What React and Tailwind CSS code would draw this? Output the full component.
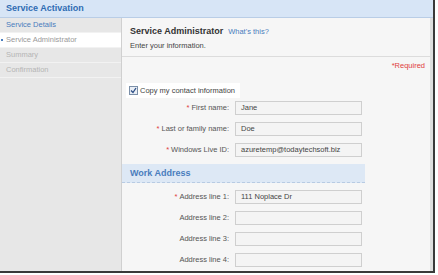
import React from 'react';

const navItems = [
  { label: 'Service Details', state: 'done' },
  { label: 'Service Administrator', state: 'current' },
  { label: 'Summary', state: 'todo' },
  { label: 'Confirmation', state: 'todo' },
];

const Field = ({ label, value, required }) => (
  <div className="flex items-center h-[14px]">
    <div className="w-[113px] text-right pr-[6px] text-[7.5px] leading-none text-[#555] whitespace-nowrap">
      {required && <span className="text-[#e04040] mr-[2px]">*</span>}
      {label}
    </div>
    <div className="w-[127px] h-[14px] border border-[#cfcfcf] bg-[#f4f4f4] flex items-center px-[5px] text-[7.5px] leading-none text-[#444]">
      {value}
    </div>
  </div>
);

const App = () => {
  return (
    <div className="w-[438px] h-[275px] bg-white overflow-hidden" style={{ fontFamily: '"Liberation Sans", Arial, sans-serif' }}>
      <div className="w-[435px] h-[273px] border-r-2 border-b-2 border-[#3a3a3a] flex flex-col">
        {/* Header */}
        <div className="h-[18px] bg-[#d7e5f6] border-b border-[#b9cde6] flex items-center px-[6px] shrink-0">
          <span className="text-[9px] leading-none font-bold text-[#2f6cb3]">Service Activation</span>
        </div>

        <div className="flex flex-1 min-h-0">
          {/* Sidebar */}
          <div className="w-[122px] bg-[#e7e7e7] border-r border-[#d0d0d0] shrink-0">
            {navItems.map((item) => (
              <div
                key={item.label}
                className={`h-[15px] flex items-center pl-[6px] border-b border-[#f2f2f2] text-[7.5px] leading-none relative ${
                  item.state === 'current' ? 'bg-white text-[#9a9a9a]' : ''
                } ${item.state === 'done' ? 'text-[#4a7dbd]' : ''} ${item.state === 'todo' ? 'text-[#b5b5b5]' : ''}`}
              >
                {item.state === 'current' && (
                  <span className="absolute left-[1px] top-[6px] w-[2px] h-[2px] bg-[#4a7dbd]" />
                )}
                {item.label}
              </div>
            ))}
          </div>

          {/* Content */}
          <div className="flex-1 bg-[#f6f6f6] flex flex-col">
            <div className="h-[39px] border-b border-[#dcdcdc] pl-[8px] pt-[9px] shrink-0">
              <div className="flex items-baseline gap-[5px] leading-none">
                <span className="text-[9px] font-bold text-[#333]">Service Administrator</span>
                <span className="text-[7.5px] text-[#4a7dbd]">What's this?</span>
              </div>
              <div className="text-[7.5px] leading-none text-[#444] mt-[6px]">Enter your information.</div>
            </div>

            <div className="flex justify-end pr-[5px] h-[26px] items-center shrink-0">
              <span className="text-[7.5px] leading-none text-[#e04040] mt-[-8px]">*Required</span>
            </div>

            <div className="flex pl-[4px] h-[15px] shrink-0">
              <div className="flex items-center h-[15px] bg-white pl-[3px] pr-[3px] w-[114px]">
                <span className="w-[9px] h-[9px] border border-[#7b8fa8] bg-[#e9eef5] flex items-center justify-center mr-[2px] shrink-0">
                  <svg width="7" height="7" viewBox="0 0 7 7">
                    <path d="M1 3.5 L3 5.5 L6 1" stroke="#2d4f86" strokeWidth="1.3" fill="none" />
                  </svg>
                </span>
                <span className="text-[7.5px] leading-none text-[#444] whitespace-nowrap">Copy my contact information</span>
              </div>
            </div>

            <div className="flex flex-col gap-[7px] mt-[3px]">
              <Field label="First name:" value="Jane" required />
              <Field label="Last or family name:" value="Doe" required />
              <Field label="Windows Live ID:" value="azuretemp@todaytechsoft.biz" required />
            </div>

            <div className="mt-[7px] h-[19px] w-[243px] bg-[#dde8f5] border-b border-dashed border-[#b8cbe3] flex items-center pl-[8px] shrink-0">
              <span className="text-[9px] leading-none font-bold text-[#4a7dbd]">Work Address</span>
            </div>

            <div className="flex flex-col gap-[7px] mt-[7px]">
              <Field label="Address line 1:" value="111 Noplace Dr" required />
              <Field label="Address line 2:" value="" />
              <Field label="Address line 3:" value="" />
              <Field label="Address line 4:" value="" />
            </div>
          </div>

          <div className="w-[3px] bg-[#dedede] shrink-0" />
        </div>
      </div>
    </div>
  );
};

export default App;
